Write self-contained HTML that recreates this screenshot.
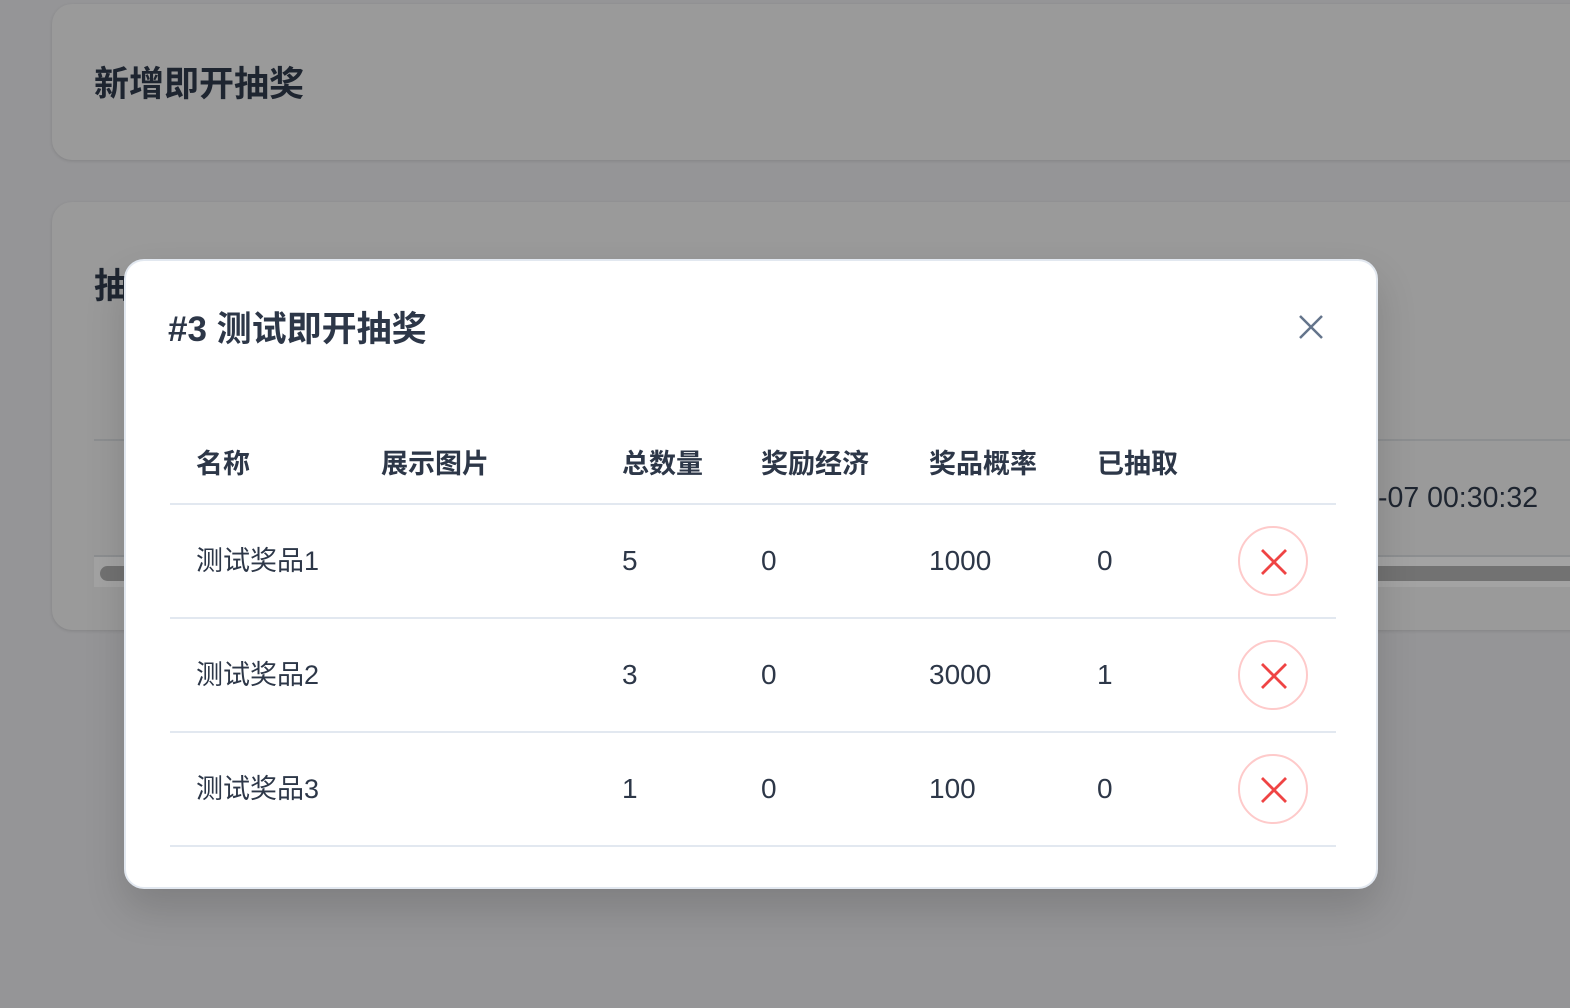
<!DOCTYPE html>
<html><head><meta charset="utf-8"><style>
*{box-sizing:border-box;margin:0;padding:0}
body{width:1570px;height:1008px;background:#959597;font-family:"Liberation Sans","Noto Sans CJK SC",sans-serif;position:relative;overflow:hidden;color:#2d3748}
.card{position:absolute;left:52px;width:1560px;background:#9a9a9a;border-radius:20px;box-shadow:0 1px 3px rgba(0,0,0,.12)}
.t{position:absolute;font-weight:bold;font-size:35px;color:#1e2530}
.modal{position:absolute;left:124px;top:259px;width:1254px;height:630px;background:#fff;border-radius:20px;border:2px solid #e2e8f0;box-shadow:0 20px 40px rgba(0,0,0,.15)}
.mt{position:absolute;left:42px;top:40px;font-size:35px;font-weight:bold;color:#2d3748}
.line{position:absolute;left:44px;width:1166px;height:2px;background:#e2e8f0}
.c{position:absolute;font-size:27px;color:#2d3748}
.n{font-size:28px}
.h{font-weight:bold}
.del{position:absolute;left:1112px;width:70px;height:70px;border-radius:50%;border:2px solid #fecaca}
.del svg{position:absolute;left:21px;top:21px}
</style></head><body>
<div class="card" style="top:4px;height:156px"><div class="t" style="left:42px;top:52px">新增即开抽奖</div></div>
<div class="card" style="top:202px;height:428px">
<div class="t" style="left:42px;top:56px">抽</div>
<div style="position:absolute;left:42px;top:237px;width:1520px;height:2px;background:#8c8e90"></div>
<div style="position:absolute;left:42px;top:353px;width:1520px;height:32px;background:#a3a3a3;border-top:2px solid #8c8e90"></div>
<div style="position:absolute;left:48px;top:364px;width:1520px;height:15px;background:#727272;border-radius:8px"></div>
<div style="position:absolute;left:1326px;top:280px;font-size:28.5px;color:#1e2530">-07 00:30:32</div>
</div>
<div class="modal">
<div class="mt">#3 测试即开抽奖</div>
<svg style="position:absolute;left:1172px;top:53px" width="26" height="26" viewBox="0 0 26 26"><path d="M2 2L24 24M24 2L2 24" stroke="#64748b" stroke-width="2.5"/></svg>
<div class="c h" style="left:70px;top:181px">名称</div>
<div class="c h" style="left:255px;top:181px">展示图片</div>
<div class="c h" style="left:496px;top:181px">总数量</div>
<div class="c h" style="left:635px;top:181px">奖励经济</div>
<div class="c h" style="left:803px;top:181px">奖品概率</div>
<div class="c h" style="left:971px;top:181px">已抽取</div>
<div class="line" style="top:242px"></div>
<div class="c" style="left:70px;top:278px">测试奖品1</div><div class="c n" style="left:496px;top:284px">5</div><div class="c n" style="left:635px;top:284px">0</div><div class="c n" style="left:803px;top:284px">1000</div><div class="c n" style="left:971px;top:284px">0</div>
<div class="del" style="top:265px"><svg width="26" height="26"><path d="M1 1L25 25M25 1L1 25" stroke="#ef4444" stroke-width="2.8"/></svg></div>
<div class="line" style="top:356px"></div>
<div class="c" style="left:70px;top:392px">测试奖品2</div><div class="c n" style="left:496px;top:398px">3</div><div class="c n" style="left:635px;top:398px">0</div><div class="c n" style="left:803px;top:398px">3000</div><div class="c n" style="left:971px;top:398px">1</div>
<div class="del" style="top:379px"><svg width="26" height="26"><path d="M1 1L25 25M25 1L1 25" stroke="#ef4444" stroke-width="2.8"/></svg></div>
<div class="line" style="top:470px"></div>
<div class="c" style="left:70px;top:506px">测试奖品3</div><div class="c n" style="left:496px;top:512px">1</div><div class="c n" style="left:635px;top:512px">0</div><div class="c n" style="left:803px;top:512px">100</div><div class="c n" style="left:971px;top:512px">0</div>
<div class="del" style="top:493px"><svg width="26" height="26"><path d="M1 1L25 25M25 1L1 25" stroke="#ef4444" stroke-width="2.8"/></svg></div>
<div class="line" style="top:584px"></div>
</div>
</body></html>
